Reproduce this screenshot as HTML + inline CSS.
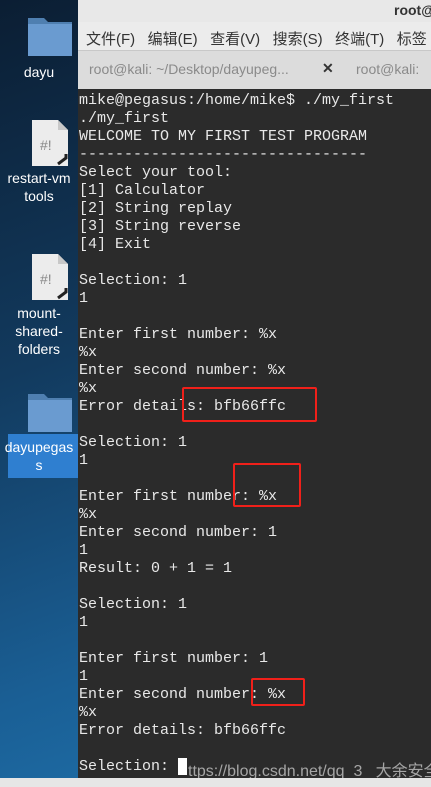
<!DOCTYPE html><html style="overflow:hidden"><head><style>
html,body{width:431px;height:787px}
body{margin:0;overflow:hidden;position:relative;background:linear-gradient(160deg,#0b1e33 0%,#123a5e 40%,#1a5f95 75%,#2075b0 100%);font-family:"Liberation Sans","Noto Sans CJK SC",sans-serif}
.win{position:absolute;left:78px;top:0;width:353px;height:778px;background:#2b2b2b;overflow:hidden}
.title{position:absolute;left:0;top:0;width:353px;height:22px;background:#e8e8e8;color:#333;font-size:14px;font-weight:bold}
.menu{position:absolute;left:0;top:22px;width:353px;height:28px;background:#ececec;color:#333;font-size:15px;white-space:nowrap}
.tabs{position:absolute;left:0;top:50px;width:353px;height:38px;background:#dcdcdc;color:#8a8a8a;font-size:14px;white-space:nowrap;border-top:1px solid #c8c8c8}
pre{position:absolute;left:1px;top:92px;margin:0;font-family:"Liberation Mono",monospace;font-size:15px;line-height:18px;color:#e8e8e8}
.box{position:absolute;border:2px solid #f0201a;border-radius:2px}
.lbl{position:absolute;color:#fff;font-size:14px;text-align:center;width:78px;left:0;line-height:18px}
.bottom{position:absolute;left:0;top:778px;width:431px;height:9px;background:#e6e6e6}
</style></head><body>
<svg style="position:absolute;left:28px;top:16px" width="44" height="40"><path d="M0 2h16l4 4h24v34H0z" fill="#4f7fb0"/><rect y="8" width="44" height="32" fill="#6a9bd0"/></svg>
<div class="lbl" style="top:63px">dayu</div>
<svg style="position:absolute;left:32px;top:120px" width="38" height="46"><path d="M0 0h26l10 10v36H0z" fill="#ececec"/><path d="M26 0v10h10z" fill="#c8c8c8"/><text x="8" y="30" font-size="14" fill="#888" font-family="Liberation Sans">#!</text><path d="M26 44l8-6v-4" stroke="#222" stroke-width="3" fill="none"/></svg>
<div class="lbl" style="top:169px;left:-6px;width:90px">restart-vm<br>tools</div>
<svg style="position:absolute;left:32px;top:254px" width="38" height="46"><path d="M0 0h26l10 10v36H0z" fill="#ececec"/><path d="M26 0v10h10z" fill="#c8c8c8"/><text x="8" y="30" font-size="14" fill="#888" font-family="Liberation Sans">#!</text><path d="M26 44l8-6v-4" stroke="#222" stroke-width="3" fill="none"/></svg>
<div class="lbl" style="top:304px">mount-<br>shared-<br>folders</div>
<svg style="position:absolute;left:28px;top:392px" width="44" height="40"><path d="M0 2h16l4 4h24v34H0z" fill="#4f7fb0"/><rect y="8" width="44" height="32" fill="#6a9bd0"/></svg>
<div style="position:absolute;left:8px;top:434px;width:70px;height:44px;background:#2f7fd0"></div>
<div class="lbl" style="top:438px">dayupegas<br>s</div>
<div class="win">
<div class="title"><span style="position:absolute;left:316px;top:2px">root@</span></div>
<div class="menu"><span style="position:absolute;left:8px;top:6px">文件(F)&nbsp;&nbsp;&nbsp;编辑(E)&nbsp;&nbsp;&nbsp;查看(V)&nbsp;&nbsp;&nbsp;搜索(S)&nbsp;&nbsp;&nbsp;终端(T)&nbsp;&nbsp;&nbsp;标签</span></div>
<div class="tabs"><span style="position:absolute;left:11px;top:10px">root@kali: ~/Desktop/dayupeg...</span><span style="position:absolute;left:244px;top:9px;color:#333;font-weight:bold">✕</span><span style="position:absolute;left:278px;top:10px">root@kali: </span></div>
<pre>mike@pegasus:/home/mike$ ./my_first
./my_first
WELCOME TO MY FIRST TEST PROGRAM
--------------------------------
Select your tool:
[1] Calculator
[2] String replay
[3] String reverse
[4] Exit

Selection: 1
1

Enter first number: %x
%x
Enter second number: %x
%x
Error details: bfb66ffc

Selection: 1
1

Enter first number: %x
%x
Enter second number: 1
1
Result: 0 + 1 = 1

Selection: 1
1

Enter first number: 1
1
Enter second number: %x
%x
Error details: bfb66ffc

Selection: <span style="background:#fff">&nbsp;</span></pre>
<div style="position:absolute;left:110px;top:757px;color:#bbb;font-size:16px;opacity:.85;white-space:nowrap">ttps://blog.csdn.net/qq_3&nbsp;&nbsp;&nbsp;大余安全</div>
</div>
<div class="box" style="left:182px;top:387px;width:131px;height:31px"></div>
<div class="box" style="left:233px;top:463px;width:64px;height:40px"></div>
<div class="box" style="left:251px;top:678px;width:50px;height:24px"></div>
<div class="bottom"></div>
</body></html>
